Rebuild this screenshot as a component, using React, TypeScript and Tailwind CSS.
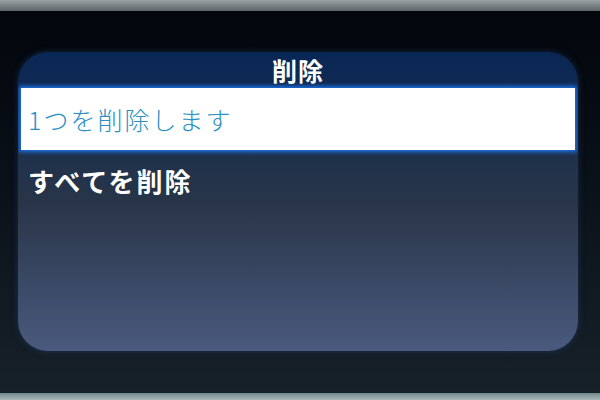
import React from "react";

export default function App() {
  const jp = { fontFamily: '"Noto Sans CJK JP", "Noto Sans", sans-serif' };
  return (
    <div className="w-[600px] h-[400px] flex flex-col bg-[#0a0f16] overflow-hidden" style={jp}>
      <div className="h-[11px] bg-gradient-to-b from-[#9aa2a4] to-[#5d6568]" />
      <div className="flex-1 flex flex-col bg-gradient-to-b from-[#03060c] via-[#0b121a] to-[#17212a] pt-[41px] pl-[18px] pr-[22px] pb-[42px]">
        <div className="flex-1 flex flex-col rounded-[30px] overflow-hidden bg-gradient-to-b from-[#082655] via-[#283548] to-[#4a5a7e] shadow-[0_0_6px_rgba(40,70,120,0.5)]">
          <div className="h-[36px] flex items-center justify-center">
            <span className="text-white text-[25px] font-bold leading-none tracking-[1px]">削除</span>
          </div>
          <div className="h-[62px] mx-[3px] bg-white flex items-center pl-[7px] shadow-[0_0_4px_2px_#1c74e6]">
            <span className="text-[#2b8fc4] text-[25px] font-light leading-none tracking-[2px]">1つを削除します</span>
          </div>
          <div className="h-[62px] flex items-center pl-[10px]">
            <span className="text-white text-[26px] font-semibold leading-none tracking-[2px]">すべてを削除</span>
          </div>
          <div className="flex-1" />
        </div>
      </div>
      <div className="h-[7px] bg-gradient-to-b from-[#6f8a8c] to-[#aab8b8]" />
    </div>
  );
}
